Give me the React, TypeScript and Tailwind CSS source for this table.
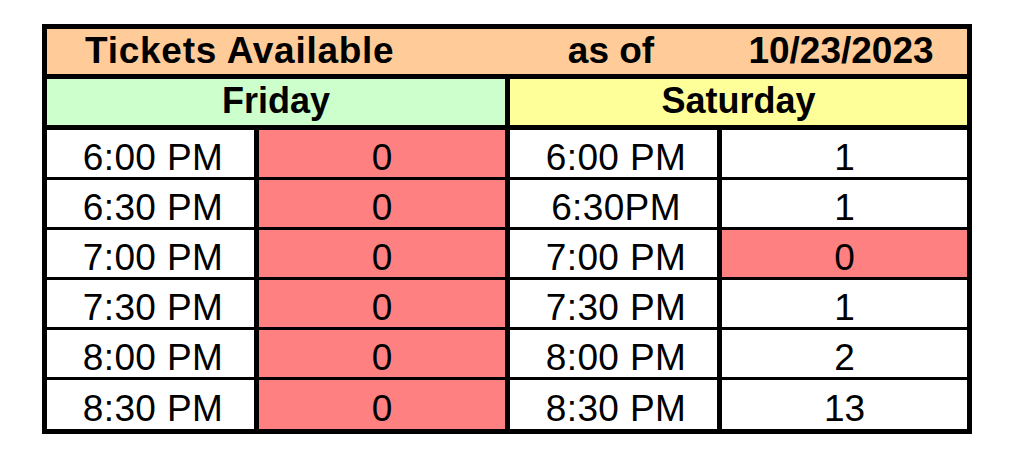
const rows = [
  { friTime: "6:00 PM", fri: 0, satTime: "6:00 PM", sat: 1 },
  { friTime: "6:30 PM", fri: 0, satTime: "6:30PM", sat: 1 },
  { friTime: "7:00 PM", fri: 0, satTime: "7:00 PM", sat: 0 },
  { friTime: "7:30 PM", fri: 0, satTime: "7:30 PM", sat: 1 },
  { friTime: "8:00 PM", fri: 0, satTime: "8:00 PM", sat: 2 },
  { friTime: "8:30 PM", fri: 0, satTime: "8:30 PM", sat: 13 }
];

export default function App() {
  return (
    <div
      className="w-[1024px] h-[455px] bg-white pt-[24px] pl-[42px] text-black"
      style={{ fontFamily: '"Liberation Sans", Arial, sans-serif' }}
    >
      <div className="w-[930px] border-[5px] border-black">
        {/* Title row */}
        <div className="grid grid-cols-[458px_212px_250px] h-[50px] border-b-[5px] border-black bg-[#ffcc99] text-[37px] font-bold leading-none">
          <div className="flex items-center pl-[38px] pb-[2px] tracking-[0.02em]">
            Tickets Available
          </div>
          <div className="flex items-center justify-center pb-[2px]">as of</div>
          <div className="flex items-center justify-center pb-[2px] pr-[2px]">
            10/23/2023
          </div>
        </div>

        {/* Day row */}
        <div className="grid grid-cols-[458px_5px_457px] h-[51px] border-b-[5px] border-black text-[36px] font-bold leading-none">
          <div className="flex items-center justify-center pb-[3px] bg-[#ccffcc]">
            Friday
          </div>
          <div className="bg-black" />
          <div className="flex items-center justify-center pb-[3px] bg-[#ffff99]">
            Saturday
          </div>
        </div>

        {/* Times */}
        <div className="grid grid-cols-[207px_246px_207px_245px] grid-rows-[47px_47px_47px_47px_47px_49px] gap-x-[5px] gap-y-[3px] bg-black text-[37px] leading-none">
          {rows.map((row) => (
            <TimeRow key={row.friTime} {...row} />
          ))}
        </div>
      </div>
    </div>
  );
}

function TimeRow({
  friTime,
  fri,
  satTime,
  sat
}: {
  friTime: string;
  fri: number;
  satTime: string;
  sat: number;
}) {
  return (
    <>
      <div className="flex items-center justify-center pt-[7px] pl-[5px] bg-white tracking-[0.01em]">
        {friTime}
      </div>
      <div
        className={`flex items-center justify-center pt-[7px] ${
          fri === 0 ? "bg-[#ff8080]" : "bg-white"
        }`}
      >
        {fri}
      </div>
      <div className="flex items-center justify-center pt-[7px] pl-[5px] bg-white tracking-[0.01em]">
        {satTime}
      </div>
      <div
        className={`flex items-center justify-center pt-[7px] ${
          sat === 0 ? "bg-[#ff8080]" : "bg-white"
        }`}
      >
        {sat}
      </div>
    </>
  );
}
